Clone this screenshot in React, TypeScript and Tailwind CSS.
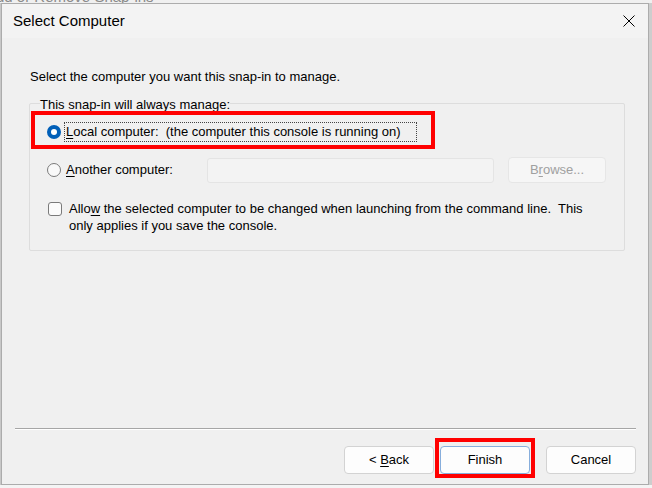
import React from 'react';

const font = { fontFamily: '"Liberation Sans", Arial, sans-serif' };

const U: React.FC<{ children: React.ReactNode }> = ({ children }) => (
  <span className="underline underline-offset-2 decoration-1">{children}</span>
);

const CloseIcon = () => (
  <svg width="12" height="12" viewBox="0 0 12 12" className="text-black">
    <path d="M0.5 0.5 L11.5 11.5 M11.5 0.5 L0.5 11.5" stroke="currentColor" strokeWidth="1" fill="none" />
  </svg>
);

const Button: React.FC<{ children: React.ReactNode; primary?: boolean; className?: string }> = ({
  children,
  primary,
  className = '',
}) => (
  <button
    className={`w-[90px] h-[28px] rounded-[4px] bg-[#fdfdfd] text-[13px] text-black flex items-center justify-center border ${
      primary ? 'border-[#87aedc]' : 'border-[#d3d3d3]'
    } ${className}`}
  >
    <span className="whitespace-pre">{children}</span>
  </button>
);

export default function App() {
  return (
    <div className="relative w-[652px] h-[488px] flex flex-col bg-[#f0f0f0] overflow-hidden" style={font}>
      {/* strip of the parent window showing above the dialog */}
      <div className="h-[3px] overflow-hidden shrink-0">
        <div className="-mt-[11px] -ml-[14px] text-[15px] leading-[16px] text-[#8a8a8a] whitespace-nowrap">
          Add or Remove Snap-ins
        </div>
      </div>

      <div className="flex flex-1 min-h-0">
        <div className="w-[1px] bg-[#c8c8c8]" />
        <div className="w-[648px] border border-[#acacac] flex flex-col bg-[#f0f0f0]">
          {/* title bar */}
          <div className="h-[34px] shrink-0 flex items-center justify-between pl-[11px] pr-[13px] bg-[#f3f3f3]">
            <span className="text-[15px] text-black">Select Computer</span>
            <CloseIcon />
          </div>

          {/* body */}
          <div className="flex-1 flex flex-col">
            <div className="pt-[30px] ml-[28px] text-[13px] leading-[17px] text-black">
              Select the computer you want this snap-in to manage.
            </div>

            {/* group box */}
            <div className="mt-[18px] ml-[27px] w-[596px] h-[148px] border border-[#dddddd] rounded-[2px] flex flex-col">
              <div className="-mt-[7px] ml-[10px] w-fit bg-[#f0f0f0] text-[13px] leading-[16px] text-black">
                This snap-in will always manage:
              </div>

              <div className="mt-[9px] ml-[17px] h-[20px] flex items-center">
                <span className="w-[14px] h-[14px] rounded-full bg-[#005fb8] flex items-center justify-center">
                  <span className="w-[6px] h-[6px] rounded-full bg-white" />
                </span>
                <span className="ml-[3px] w-[353px] h-[20px] border border-dotted border-[#444] flex items-center pl-[1px] text-[13px] text-black whitespace-pre">
                  <U>L</U>ocal computer:  (the computer this console is running on)
                </span>
              </div>

              <div className="mt-[15px] ml-[17px] h-[26px] flex items-center">
                <span className="w-[14px] h-[14px] rounded-full border border-[#7a7a7a] bg-[#f9f9f9]" />
                <span className="ml-[5px] w-[141px] text-[13px] text-black">
                  <U>A</U>nother computer:
                </span>
                <div className="w-[287px] h-[25px] border border-[#e4e4e4] bg-[#f3f3f3] rounded-[3px]" />
                <div className="ml-[14px] w-[98px] h-[26px] border border-[#e6e6e6] bg-[#f6f6f6] rounded-[4px] flex items-center justify-center text-[13px] text-[#a0a0a0]">
                  B<U>r</U>owse...
                </div>
              </div>

              <div className="mt-[17px] ml-[18px] flex items-start">
                <span className="mt-[2px] w-[14px] h-[14px] rounded-[3px] border border-[#7a7a7a] bg-[#fbfbfb] shrink-0" />
                <span className="ml-[7px] text-[13px] leading-[17px] text-black whitespace-pre">
                  Allo<U>w</U> the selected computer to be changed when launching from the command line.  This
                  <br />
                  only applies if you save the console.
                </span>
              </div>
            </div>

            {/* separator */}
            <div className="mt-[177px] ml-[13px] w-[621px] h-0 border-t border-b border-t-[#a6a6a6] border-b-white" />

            {/* buttons */}
            <div className="mt-[16px] mr-[12px] flex justify-end">
              <Button>
                {'< '}
                <U>B</U>ack
              </Button>
              <Button primary className="ml-[6px]">
                Finish
              </Button>
              <Button className="ml-[16px]">Cancel</Button>
            </div>
          </div>
        </div>
        <div className="flex-1 bg-[#cdcdcd]" />
      </div>

      <div className="h-[3px] shrink-0 bg-[#f4f4f4]" />

      {/* red annotation boxes */}
      <div className="absolute left-[31px] top-[111px] w-[404px] h-[38px] border-4 border-[#ff0000]" />
      <div className="absolute left-[435px] top-[438px] w-[100px] h-[40px] border-4 border-[#ff0000]" />
    </div>
  );
}
